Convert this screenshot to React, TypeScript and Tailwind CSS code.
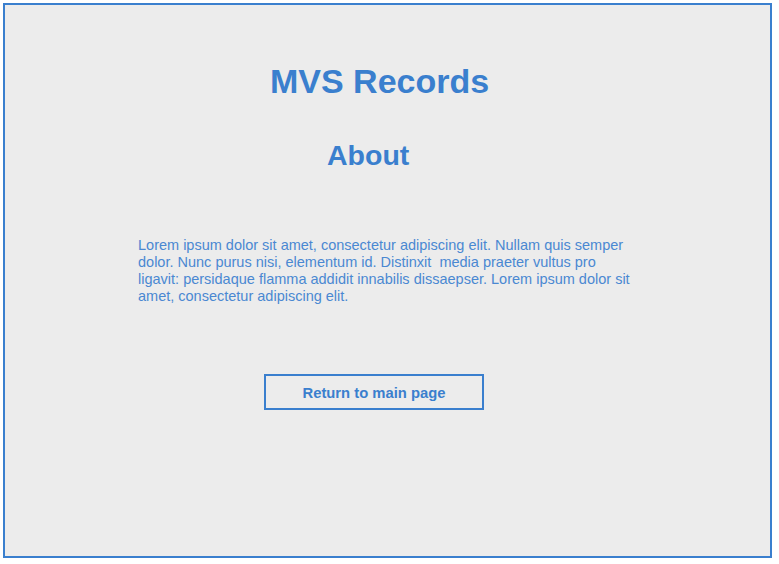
export default function App() {
  return (
    <div className="w-[779px] h-[564px] bg-white pt-[3px] pl-[3px]" style={{ fontFamily: '"Liberation Sans", Arial, sans-serif' }}>
      <div className="w-[769px] h-[555px] border-2 border-[#3a7fce] bg-[#ececec] flex flex-col items-start text-[#3a7fce]">
        <h1 className="ml-[265px] mt-[59px] text-[34px] leading-[34px] font-bold">MVS Records</h1>
        <h2 className="ml-[322px] mt-[43px] text-[28.5px] leading-[28px] font-bold">About</h2>
        <p className="ml-[133px] mt-[68px] w-[502px] text-[14.5px] leading-[17px] text-[#4a88d2]">
          Lorem ipsum dolor sit amet, consectetur adipiscing elit. Nullam quis semper dolor. Nunc purus nisi, elementum id. Distinxit&nbsp; media praeter vultus pro ligavit: persidaque flamma addidit innabilis dissaepser. Lorem ipsum dolor sit amet, consectetur adipiscing elit.
        </p>
        <button className="ml-[259px] mt-[69px] w-[220px] h-[36px] pt-[2px] border-2 border-[#3a7fce] text-[14.8px] font-bold text-[#3a7fce] flex items-center justify-center">
          Return to main page
        </button>
      </div>
    </div>
  );
}
